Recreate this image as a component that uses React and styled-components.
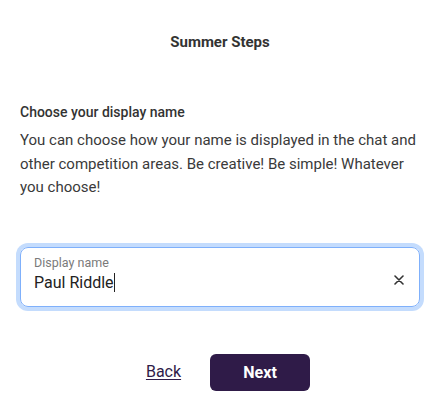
import React from "react";
import styled, { createGlobalStyle } from "styled-components";

const Global = createGlobalStyle`
  html, body { margin: 0; padding: 0; background: #fff; }
  body { font-family: Roboto, "Noto Sans", sans-serif; color: #333; }
  * { box-sizing: border-box; }
`;

const Page = styled.div`
  width: 448px;
  height: 404px;
  padding: 32px 28px 0 20px;
  display: flex;
  flex-direction: column;
`;

const Title = styled.h1`
  margin: 0;
  font-size: 15px;
  line-height: 20px;
  font-weight: 700;
  text-align: center;
  color: #333;
`;

const Heading = styled.h2`
  margin: 50px 0 0;
  font-size: 14px;
  line-height: 20px;
  font-weight: 500;
  color: #333;
`;

const Para = styled.p`
  margin: 7px 0 0;
  font-size: 15px;
  line-height: 23.5px;
  color: #3a3a3a;
`;

const Field = styled.div`
  margin-top: 47px;
  height: 60px;
  border: 1px solid #7fb0fb;
  border-radius: 8px;
  box-shadow: 0 0 0 4px #c4dcfd;
  padding: 7px 14px 0 13px;
  display: flex;
  align-items: center;
`;

const FieldBody = styled.div`
  flex: 1;
  display: flex;
  flex-direction: column;
  align-self: flex-start;
`;

const Label = styled.label`
  font-size: 12.5px;
  line-height: 16px;
  color: #7a7a7a;
`;

const Value = styled.div`
  margin-top: 2px;
  font-size: 16px;
  line-height: 20px;
  color: #222;
  display: flex;
  align-items: center;
`;

const Caret = styled.span`
  display: inline-block;
  width: 1px;
  height: 19px;
  background: #222;
`;

const Clear = styled.button`
  border: 0;
  background: none;
  padding: 0;
  width: 12px;
  height: 12px;
  display: flex;
  align-items: center;
  justify-content: center;
  cursor: pointer;
`;

const Actions = styled.div`
  margin-top: 47px;
  display: flex;
  align-items: center;
  justify-content: center;
  gap: 29px;
  margin-left: -20px;
  margin-right: -28px;
  padding-left: 8px;
`;

const BackLink = styled.a`
  font-size: 16px;
  line-height: 20px;
  color: #2f1b48;
  text-decoration: underline;
  text-underline-offset: 2px;
`;

const NextButton = styled.button`
  width: 100px;
  height: 37px;
  border: 0;
  border-radius: 6px;
  background: #2f1b48;
  color: #fff;
  font-family: Roboto, "Noto Sans", sans-serif;
  font-size: 16px;
  font-weight: 700;
`;

export default function App() {
  return (
    <>
      <Global />
      <Page>
        <Title>Summer Steps</Title>
        <Heading>Choose your display name</Heading>
        <Para>
          You can choose how your name is displayed in the chat and other
          competition areas. Be creative! Be simple! Whatever you choose!
        </Para>
        <Field>
          <FieldBody>
            <Label>Display name</Label>
            <Value>
              Paul Riddle<Caret />
            </Value>
          </FieldBody>
          <Clear aria-label="Clear">
            <svg width="10" height="10" viewBox="0 0 10 10">
              <path d="M1 1L9 9M9 1L1 9" stroke="#333" strokeWidth="1.6" strokeLinecap="round" />
            </svg>
          </Clear>
        </Field>
        <Actions>
          <BackLink href="#">Back</BackLink>
          <NextButton>Next</NextButton>
        </Actions>
      </Page>
    </>
  );
}
